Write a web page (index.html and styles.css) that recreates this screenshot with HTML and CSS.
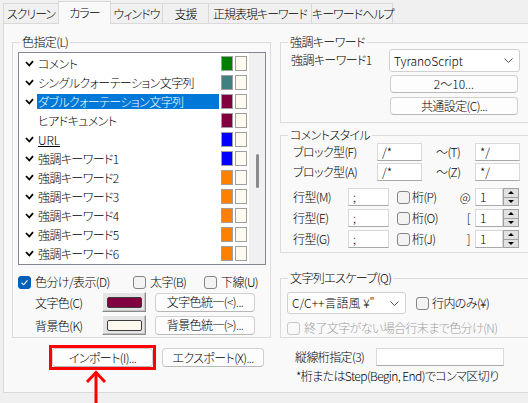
FILE: index.html
```html
<!DOCTYPE html>
<html lang="ja">
<head>
    <meta charset="UTF-8">
    <meta name="viewport" content="width=device-width, initial-scale=1.0">
    <title>カラー設定</title>
    <link rel="stylesheet" href="styles.css">
</head>
<body>
    <svg class="defs" width="0" height="0">
        <symbol id="chk" viewBox="0 0 9 7"><polyline points="1,2 4.3,5.5 8,1.2" fill="none" stroke="#000" stroke-width="1.8"/></symbol>
        <symbol id="chev" viewBox="0 0 9 5"><polyline points="0.5,0.5 4.5,4.5 8.5,0.5" fill="none" stroke="#555" stroke-width="1"/></symbol>
    </svg>

    <div class="window">
        <div class="tabs">
            <div class="tab tab-screen">スクリーン</div>
            <div class="tab tab-color active">カラー</div>
            <div class="tab tab-window">ウィンドウ</div>
            <div class="tab tab-support">支援</div>
            <div class="tab tab-regex">正規表現キーワード</div>
            <div class="tab tab-help">キーワードヘルプ</div>
        </div>

        <div class="pane">
            <div class="col-left">
                <fieldset class="group color-group">
                    <legend>色指定(L)</legend>
                    <div class="group-body">
                        <div class="listbox">
                            <div class="list-items">
                                <div class="item"><span class="check"><svg><use href="#chk"/></svg></span><span class="name">コメント</span><span class="sw fg-green"></span><span class="sw bg-cream"></span></div>
                                <div class="item"><span class="check"><svg><use href="#chk"/></svg></span><span class="name">シングルクォーテーション文字列</span><span class="sw fg-teal"></span><span class="sw bg-cream"></span></div>
                                <div class="item selected"><span class="check"><svg><use href="#chk"/></svg></span><span class="name">ダブルクォーテーション文字列</span><span class="sw fg-wine"></span><span class="sw bg-cream"></span></div>
                                <div class="item"><span class="check"></span><span class="name">ヒアドキュメント</span><span class="sw fg-wine"></span><span class="sw bg-cream"></span></div>
                                <div class="item"><span class="check"><svg><use href="#chk"/></svg></span><span class="name url">URL</span><span class="sw fg-blue"></span><span class="sw bg-cream"></span></div>
                                <div class="item"><span class="check"><svg><use href="#chk"/></svg></span><span class="name">強調キーワード1</span><span class="sw fg-blue"></span><span class="sw bg-cream"></span></div>
                                <div class="item"><span class="check"><svg><use href="#chk"/></svg></span><span class="name">強調キーワード2</span><span class="sw fg-orange"></span><span class="sw bg-cream"></span></div>
                                <div class="item"><span class="check"><svg><use href="#chk"/></svg></span><span class="name">強調キーワード3</span><span class="sw fg-orange"></span><span class="sw bg-cream"></span></div>
                                <div class="item"><span class="check"><svg><use href="#chk"/></svg></span><span class="name">強調キーワード4</span><span class="sw fg-orange"></span><span class="sw bg-cream"></span></div>
                                <div class="item"><span class="check"><svg><use href="#chk"/></svg></span><span class="name">強調キーワード5</span><span class="sw fg-orange"></span><span class="sw bg-cream"></span></div>
                                <div class="item"><span class="check"><svg><use href="#chk"/></svg></span><span class="name">強調キーワード6</span><span class="sw fg-orange"></span><span class="sw bg-cream"></span></div>
                            </div>
                            <div class="vscroll"><div class="thumb"></div></div>
                        </div>

                        <div class="opts">
                            <label class="opt opt-show"><span class="cb checked"><svg viewBox="0 0 13 13"><polyline points="3,6.8 5.5,9.2 10,4" fill="none" stroke="#fff" stroke-width="1.3"/></svg></span>色分け/表示(D)</label>
                            <label class="opt opt-bold"><span class="cb"></span>太字(B)</label>
                            <label class="opt"><span class="cb"></span>下線(U)</label>
                        </div>

                        <div class="color-row">
                            <span class="color-label">文字色(C)</span>
                            <span class="color-btn"><span class="color-chip fg-wine"></span></span>
                            <span class="btn unify-btn">文字色統一(&lt;)...</span>
                        </div>
                        <div class="color-row">
                            <span class="color-label">背景色(K)</span>
                            <span class="color-btn"><span class="color-chip bg-cream"></span></span>
                            <span class="btn unify-btn">背景色統一(&gt;)...</span>
                        </div>
                    </div>
                </fieldset>

                <div class="io-row">
                    <div class="highlight"><span class="btn io-btn">インポート(I)...</span></div>
                    <span class="btn io-btn export-btn">エクスポート(X)...</span>
                </div>
            </div>

            <div class="col-right">
                <fieldset class="group kw-group">
                    <legend>強調キーワード</legend>
                    <div class="group-body kw-body">
                        <span class="kw-label">強調キーワード1</span>
                        <div class="kw-controls">
                            <div class="combo"><span>TyranoScript</span><svg class="chev"><use href="#chev"/></svg></div>
                            <span class="btn kw-btn">2〜10...</span>
                            <span class="btn kw-btn">共通設定(C)...</span>
                        </div>
                    </div>
                </fieldset>

                <fieldset class="group comment-group">
                    <legend>コメントスタイル</legend>
                    <div class="group-body comment-body">
                        <div class="block-row">
                            <span class="lbl">ブロック型(F)</span><span class="edit ed-block">/*</span>
                            <span class="tilde">〜(T)</span><span class="edit ed-block">*/</span>
                        </div>
                        <div class="block-row">
                            <span class="lbl">ブロック型(A)</span><span class="edit ed-block">/*</span>
                            <span class="tilde">〜(Z)</span><span class="edit ed-block">*/</span>
                        </div>
                        <div class="line-row">
                            <span class="lbl">行型(M)</span><span class="edit ed-line">;</span>
                            <label class="opt col-opt"><span class="cb"></span>桁(P)</label>
                            <span class="sym">@</span>
                            <span class="spin"><span class="edit">1</span><span class="spin-btns"><i class="up"></i><i class="down"></i></span></span>
                        </div>
                        <div class="line-row">
                            <span class="lbl">行型(E)</span><span class="edit ed-line">;</span>
                            <label class="opt col-opt"><span class="cb"></span>桁(O)</label>
                            <span class="sym">[</span>
                            <span class="spin"><span class="edit">1</span><span class="spin-btns"><i class="up"></i><i class="down"></i></span></span>
                        </div>
                        <div class="line-row">
                            <span class="lbl">行型(G)</span><span class="edit ed-line">;</span>
                            <label class="opt col-opt"><span class="cb"></span>桁(J)</label>
                            <span class="sym">]</span>
                            <span class="spin"><span class="edit">1</span><span class="spin-btns"><i class="up"></i><i class="down"></i></span></span>
                        </div>
                    </div>
                </fieldset>

                <fieldset class="group escape-group">
                    <legend>文字列エスケープ(Q)</legend>
                    <div class="group-body escape-body">
                        <div class="escape-row">
                            <div class="combo esc-combo"><span>C/C++言語風 ¥"</span><svg class="chev"><use href="#chev"/></svg></div>
                            <label class="opt"><span class="cb"></span>行内のみ(¥)</label>
                        </div>
                        <label class="opt disabled"><span class="cb"></span>終了文字がない場合行末まで色分け(N)</label>
                    </div>
                </fieldset>

                <div class="vline-row">
                    <span class="lbl">縦線桁指定(3)</span><span class="edit vline-edit"></span>
                </div>
                <div class="note">*桁またはStep(Begin, End)でコンマ区切り</div>
            </div>
        </div>

        <svg class="arrow" viewBox="0 0 24 33">
            <line x1="12" y1="4" x2="12" y2="33" stroke="#f00" stroke-width="3"/>
            <polyline points="3,12 12,2.5 21,12" fill="none" stroke="#f00" stroke-width="3"/>
        </svg>
    </div>
</body>
</html>
```

FILE: styles.css
```css
/* Base */
* {
    box-sizing: border-box;
}
body {
    margin: 0;
    background-color: #f0f0f0;
    color: #000;
    font-family: "Noto Sans CJK JP", "Noto Sans", sans-serif;
    font-size: 12px;
    font-weight: 300;
    line-height: 14px;
    letter-spacing: -0.6px;
    font-feature-settings: "palt";
}
.defs {
    position: absolute;
}
.window {
    position: relative;
    width: 528px;
    height: 403px;
    overflow: hidden;
}

/* Tabs */
.tabs {
    position: relative;
    z-index: 1;
    display: flex;
    align-items: flex-end;
    height: 23px;
    padding-left: 3px;
}
.tab {
    height: 20px;
    margin-right: -1px;
    border: 1px solid #d9d9d9;
    border-bottom: none;
    background-color: #f0f0f0;
    text-align: center;
    line-height: 19px;
    letter-spacing: -1px;
    white-space: nowrap;
}
.tab.active {
    height: 23px;
    margin-bottom: -1px;
    background-color: #f9f9f9;
    line-height: 21px;
}
.tab-screen { width: 56px; }
.tab-color { width: 53px; }
.tab-window { width: 53px; }
.tab-support { width: 47px; }
.tab-regex { width: 104px; }
.tab-help { width: 82px; }

/* Tab page */
.pane {
    display: flex;
    gap: 9px;
    width: 560px;
    height: 370px;
    margin-left: 3px;
    padding: 11px 0 0 8px;
    border: 1px solid #d9d9d9;
    background-color: #f9f9f9;
}
.group {
    margin: 0;
    padding: 0;
    min-width: 0;
    border: 1px solid #dcdcdc;
}
.group legend {
    margin-left: 7px;
    padding: 0 2px;
    line-height: 14px;
}

/* Left column */
.col-left {
    flex: none;
    width: 259px;
}
.color-group .group-body {
    padding: 3px 0 2px 5px;
}
.listbox {
    display: flex;
    width: 248px;
    height: 213px;
    border: 1px solid #828790;
    background-color: #fff;
}
.list-items {
    width: 230px;
}
.item {
    display: flex;
    height: 19px;
}
.check {
    width: 18px;
    padding: 7px 0 0 6px;
}
.check svg {
    display: block;
    width: 9px;
    height: 7px;
}
.name {
    width: 182px;
    height: 15px;
    margin-top: 3px;
    padding-left: 1px;
    line-height: 15px;
    white-space: nowrap;
}
.item.selected .name {
    background-color: #0078d7;
    color: #fff;
}
.url {
    text-decoration: underline;
    letter-spacing: 0;
}
.sw {
    width: 12px;
    height: 15px;
    margin: 3px 0 0 2px;
    border: 1px solid #a0a0a0;
}
.fg-green { background-color: #008000; }
.fg-teal { background-color: #408080; }
.fg-wine { background-color: #800040; }
.fg-blue { background-color: #0000ff; }
.fg-orange { background-color: #ff8000; }
.bg-cream { background-color: #fffaf0; }

.vscroll {
    width: 16px;
    padding: 101px 0 0 7px;
    background-color: #f0f0f0;
}
.thumb {
    width: 3px;
    height: 34px;
    border-radius: 2px;
    background-color: #8a8a8a;
}

/* Check boxes */
.opts {
    display: flex;
    align-items: center;
    height: 14px;
    margin-top: 10px;
}
.opt {
    display: flex;
    align-items: center;
    white-space: nowrap;
}
.cb {
    flex: none;
    width: 13px;
    height: 13px;
    margin-right: 4px;
    border: 1px solid #858585;
    border-radius: 3px;
    background-color: #f3f3f3;
}
.cb.checked {
    border-color: #005fb8;
    background-color: #005fb8;
}
.cb svg {
    display: block;
    width: 11px;
    height: 11px;
}
.opt-show { width: 115px; }
.opt-bold { width: 71px; }

.color-row {
    display: flex;
    align-items: center;
    height: 20px;
    margin-top: 3px;
}
.color-label {
    width: 84px;
    padding: 2px 0 0 17px;
}
.color-btn {
    width: 44px;
    height: 20px;
    padding: 4px 3px 0 4px;
    border: 1px solid;
    border-color: #fafafa #8c8c8c #8c8c8c #fafafa;
    background-color: #e4e4e4;
    box-shadow: inset -1px -1px #c4c4c4;
}
.color-chip {
    display: block;
    height: 11px;
    border: 1px solid #3c3c3c;
    border-radius: 2px;
}

/* Buttons */
.btn {
    display: flex;
    align-items: center;
    justify-content: center;
    border: 1px solid #d0d0d0;
    border-bottom-color: #b8b8b8;
    border-radius: 4px;
    background-color: #fdfdfd;
    white-space: nowrap;
}
.unify-btn {
    width: 100px;
    height: 19px;
    margin-left: 9px;
}
.io-row {
    display: flex;
    align-items: center;
    margin-top: 7px;
    padding-left: 37px;
}
.highlight {
    border: 3px solid #f00;
}
.io-btn {
    width: 101px;
    height: 19px;
}
.export-btn {
    width: 102px;
    margin-left: 6px;
}

/* Right column */
.col-right {
    flex: none;
    width: 252px;
}
.kw-body {
    display: flex;
    padding: 0 0 7px 10px;
}
.kw-label {
    width: 98px;
    padding-top: 4px;
}
.kw-controls {
    width: 131px;
}
.combo {
    display: flex;
    align-items: center;
    justify-content: space-between;
    height: 23px;
    padding: 0 6px 0 4px;
    border: 1px solid #d0d0d0;
    border-radius: 3px;
    background-color: #fff;
    letter-spacing: 0;
    white-space: nowrap;
}
.chev {
    width: 9px;
    height: 5px;
}
.kw-btn {
    width: 128px;
    height: 18px;
    margin: 3px 0 0 1px;
    letter-spacing: 0;
}
.kw-btn + .kw-btn {
    margin-top: 4px;
    letter-spacing: -0.6px;
}

.comment-group {
    margin-top: 5px;
}
.comment-body {
    padding: 1px 0 4px 12px;
}
.block-row,
.line-row {
    display: flex;
    align-items: center;
    height: 18px;
}
.block-row + .block-row {
    margin-top: 2px;
}
.line-row {
    margin-top: 3px;
}
.block-row + .line-row {
    margin-top: 7px;
}
.block-row .lbl { width: 84px; }
.line-row .lbl { width: 55px; }
.edit {
    height: 18px;
    padding-left: 4px;
    border: 1px solid #d9d9d9;
    border-bottom-color: #a8a8a8;
    background-color: #fff;
    line-height: 16px;
    letter-spacing: 0;
}
.ed-block { width: 45px; }
.tilde {
    width: 53px;
    padding-left: 14px;
}
.ed-line {
    width: 41px;
    margin-right: 8px;
}
.col-opt {
    width: 58px;
}
.col-opt .cb {
    margin-right: 2px;
}
.sym {
    width: 20px;
    padding-right: 5px;
    text-align: right;
}
.spin {
    display: flex;
}
.spin .edit {
    width: 28px;
}
.spin-btns {
    display: flex;
    flex-direction: column;
    width: 16px;
    height: 18px;
    border: 1px solid #a0a0a0;
    background-color: #e1e1e1;
}
.spin-btns i {
    flex: 1;
    display: flex;
    align-items: center;
    justify-content: center;
}
.spin-btns i + i {
    border-top: 1px solid #a0a0a0;
}
.spin-btns i::after {
    content: "";
    border-left: 3px solid transparent;
    border-right: 3px solid transparent;
}
.spin-btns .up::after {
    border-bottom: 3px solid #000;
}
.spin-btns .down::after {
    border-top: 3px solid #000;
}

.escape-group {
    margin-top: 18px;
}
.escape-body {
    padding: 7px 0 2px 6px;
}
.escape-row {
    display: flex;
    align-items: center;
}
.esc-combo {
    width: 119px;
    height: 22px;
    margin-right: 10px;
}
.escape-row .cb {
    margin-right: 3px;
}
.opt.disabled {
    margin-top: 7px;
    color: #a0a0a0;
}
.opt.disabled .cb {
    border-color: #c8c8c8;
    background-color: #f9f9f9;
}

.vline-row {
    display: flex;
    align-items: center;
    margin-top: 10px;
    padding-left: 15px;
}
.vline-row .lbl { width: 81px; }
.vline-edit { width: 128px; }
.note {
    margin-top: 3px;
    padding-left: 16px;
}

/* Red marker */
.arrow {
    position: absolute;
    left: 84px;
    top: 370px;
    width: 24px;
    height: 33px;
}
```
